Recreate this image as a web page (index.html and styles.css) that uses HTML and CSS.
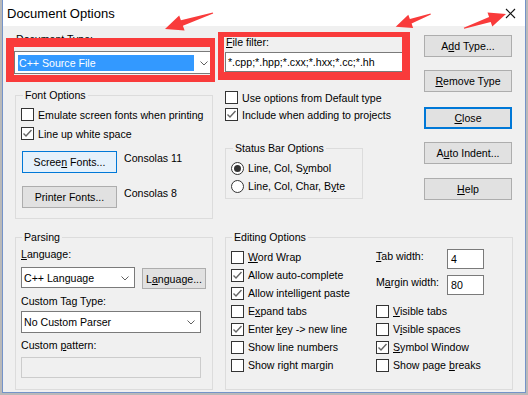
FILE: index.html
```html
<!DOCTYPE html>
<html lang="en">
<head>
    <meta charset="UTF-8">
    <title>Document Options</title>
    <link rel="stylesheet" href="styles.css">
</head>
<body>

    <div class="window">
        <div class="titlebar">
            <span class="title">Document Options</span>
        </div>

        <div class="dialog">
            <div class="top">
                <div class="col-left">
                    <div class="label doc-label">Document <u>T</u>ype:</div>
                    <div class="combo combo-doc">
                        <span class="selected">C++ Source File</span>
                        <svg class="chevron" width="8" height="5" viewBox="0 0 8 5"><polyline points="0.5,0.5 4,4 7.5,0.5" /></svg>
                    </div>

                    <fieldset class="group font-group">
                        <legend>Font Options</legend>
                        <div class="check row19"><span class="box"></span><span>Emulate screen fonts when printing</span></div>
                        <div class="check row19"><span class="box on"><svg width="11" height="11" viewBox="0 0 11 11"><polyline points="1.5,5.5 4,8 9.5,2" /></svg></span><span>Line up white space</span></div>
                        <div class="font-row first">
                            <button class="btn btn-hot font-btn">Scree<u>n</u> Fonts...</button>
                            <span class="font-name">Consolas 11</span>
                        </div>
                        <div class="font-row">
                            <button class="btn font-btn">Printer Fonts...</button>
                            <span class="font-name">Consolas 8</span>
                        </div>
                    </fieldset>
                </div>

                <div class="col-mid">
                    <div class="label filter-label"><u>F</u>ile filter:</div>
                    <div class="field filter">*.cpp;*.hpp;*.cxx;*.hxx;*.cc;*.hh</div>

                    <div class="mid-checks">
                        <div class="check row17"><span class="box"></span><span>Use options from Default type</span></div>
                        <div class="check row17"><span class="box on"><svg width="11" height="11" viewBox="0 0 11 11"><polyline points="1.5,5.5 4,8 9.5,2" /></svg></span><span>Include when adding to projects</span></div>
                    </div>

                    <fieldset class="group status-group">
                        <legend>Status Bar Options</legend>
                        <div class="check row18"><span class="radio on"></span><span>Line, Col, S<u>y</u>mbol</span></div>
                        <div class="check row18"><span class="radio"></span><span>Line, Col, Char, B<u>y</u>te</span></div>
                    </fieldset>
                </div>

                <div class="col-btns">
                    <button class="btn side-btn add">A<u>d</u>d Type...</button>
                    <button class="btn side-btn remove"><u>R</u>emove Type</button>
                    <button class="btn side-btn close"><u>C</u>lose</button>
                    <button class="btn side-btn indent">A<u>u</u>to Indent...</button>
                    <button class="btn side-btn help"><u>H</u>elp</button>
                </div>
            </div>

            <div class="bottom">
                <fieldset class="group parse-group">
                    <legend>Parsing</legend>
                    <div class="label"><u>L</u>anguage:</div>
                    <div class="lang-row">
                        <div class="combo combo-lang">
                            <span>C++ Language</span>
                            <svg class="chevron" width="8" height="5" viewBox="0 0 8 5"><polyline points="0.5,0.5 4,4 7.5,0.5" /></svg>
                        </div>
                        <button class="btn lang-btn">L<u>a</u>nguage...</button>
                    </div>
                    <div class="label tag-label">Custom Tag Type:</div>
                    <div class="combo combo-tag">
                        <span>No Custom Parser</span>
                        <svg class="chevron" width="8" height="5" viewBox="0 0 8 5"><polyline points="0.5,0.5 4,4 7.5,0.5" /></svg>
                    </div>
                    <div class="label pattern-label">Custom <u>p</u>attern:</div>
                    <div class="field disabled pattern"></div>
                </fieldset>

                <fieldset class="group edit-group">
                    <legend>Editing Options</legend>
                    <div class="edit-cols">
                        <div class="edit-left">
                            <div class="check row18"><span class="box"></span><span><u>W</u>ord Wrap</span></div>
                            <div class="check row18"><span class="box on"><svg width="11" height="11" viewBox="0 0 11 11"><polyline points="1.5,5.5 4,8 9.5,2" /></svg></span><span>Allow auto-complete</span></div>
                            <div class="check row18"><span class="box on"><svg width="11" height="11" viewBox="0 0 11 11"><polyline points="1.5,5.5 4,8 9.5,2" /></svg></span><span>Allow intelligent paste</span></div>
                            <div class="check row18"><span class="box"></span><span>E<u>x</u>pand tabs</span></div>
                            <div class="check row18"><span class="box on"><svg width="11" height="11" viewBox="0 0 11 11"><polyline points="1.5,5.5 4,8 9.5,2" /></svg></span><span>Enter <u>k</u>ey -&gt; new line</span></div>
                            <div class="check row18"><span class="box"></span><span>Show line numbers</span></div>
                            <div class="check row18"><span class="box"></span><span>Show right margin</span></div>
                        </div>
                        <div class="edit-right">
                            <div class="num-row first">
                                <span class="num-label"><u>T</u>ab width:</span>
                                <div class="field num">4</div>
                            </div>
                            <div class="num-row">
                                <span class="num-label">M<u>a</u>rgin width:</span>
                                <div class="field num">80</div>
                            </div>
                            <div class="right-checks">
                                <div class="check row18"><span class="box"></span><span><u>V</u>isible tabs</span></div>
                                <div class="check row18"><span class="box"></span><span>V<u>i</u>sible spaces</span></div>
                                <div class="check row18"><span class="box on"><svg width="11" height="11" viewBox="0 0 11 11"><polyline points="1.5,5.5 4,8 9.5,2" /></svg></span><span><u>S</u>ymbol Window</span></div>
                                <div class="check row18"><span class="box"></span><span>Show page <u>b</u>reaks</span></div>
                            </div>
                        </div>
                    </div>
                </fieldset>
            </div>
        </div>
    </div>

    <!-- annotation marks drawn over the screenshot -->
    <div class="redbox redbox-type"></div>
    <div class="redbox redbox-filter"></div>
    <svg class="arrows" width="528" height="40" viewBox="0 0 528 40">
        <polygon points="213.2,13.5 182.9,25.8 184.6,30.5 165,29 179.2,15.5 180.9,20.2 212.8,12.5" />
        <polygon points="430.9,14.5 411.6,23.6 413.1,27.9 395.7,26.7 408.3,14.7 409.9,19 430.5,13.5" />
        <polygon points="464.2,28.8 490.7,21.9 492.3,26.6 506,14 487.5,12.4 489.1,17.1 463.8,27.8" />
        <line class="x-line" x1="506" y1="9" x2="515" y2="18" />
        <line class="x-line" x1="515" y1="9" x2="506" y2="18" />
    </svg>

</body>
</html>
```

FILE: styles.css
```css
* {
    box-sizing: border-box;
}
html, body {
    margin: 0;
    padding: 0;
}
body {
    position: relative;
    width: 528px;
    height: 395px;
    overflow: hidden;
    background-color: #b9b9b9;
    font-family: "Liberation Sans", Arial, sans-serif;
    font-size: 10.6px;
    color: #000;
}
u {
    text-underline-offset: 1px;
}
.window {
    margin-left: 2px;
    width: 524px;
    height: 393px;
    border: 1px solid #7493c9;
    border-top: 0;
    background-color: #f0f0f0;
}
.titlebar {
    height: 26px;
    background-color: #fff;
    display: flex;
    align-items: center;
    padding-left: 4px;
}
.title {
    font-size: 13px;
}
.dialog {
    padding: 5px 0 0 11px;
}
.top {
    display: flex;
    height: 188px;
}
.col-left {
    width: 199px;
}
.col-mid {
    width: 182px;
    margin-left: 12px;
}
.col-btns {
    width: 88px;
    margin-left: 17px;
    display: flex;
    flex-direction: column;
}
.label {
    height: 13px;
    line-height: 13px;
    white-space: nowrap;
}
.doc-label {
    padding-left: 2px;
    margin-top: 2px;
}

/* controls */
.combo {
    position: relative;
    background-color: #fff;
    border: 1px solid #7a7a7a;
    display: flex;
    align-items: center;
    padding-left: 2px;
}
.chevron {
    position: absolute;
    right: 5px;
    top: 50%;
    margin-top: -2px;
}
.chevron polyline {
    fill: none;
    stroke: #606060;
    stroke-width: 1;
}
.combo-doc {
    width: 197px;
    height: 23px;
    margin-top: 5px;
    align-items: flex-start;
    padding: 3px 0 0 3px;
}
.combo-doc .chevron {
    right: 2px;
}
.selected {
    width: 176px;
    height: 16px;
    line-height: 16px;
    padding-left: 1px;
    background-color: #3399ff;
    color: #fff;
}
.field {
    background-color: #fff;
    border: 1px solid #7a7a7a;
    line-height: 18px;
    padding-left: 2px;
    white-space: nowrap;
}
.field.disabled {
    background-color: #f0f0f0;
    border-color: #cccccc;
}
.btn {
    display: block;
    height: 22px;
    margin: 0;
    padding: 0;
    background-color: #e1e1e1;
    border: 1px solid #adadad;
    font-family: inherit;
    font-size: 10.6px;
    color: #000;
    text-align: center;
    white-space: nowrap;
}
.btn-hot {
    background-color: #e5f1fb;
    border-color: #0078d7;
}
.check {
    display: flex;
    align-items: center;
    gap: 4px;
    white-space: nowrap;
}
.row17 { height: 17px; }
.row18 { height: 18px; }
.row19 { height: 19px; }
.box {
    width: 13px;
    height: 13px;
    flex: none;
    border: 1px solid #333;
    background-color: #fff;
    display: flex;
    align-items: center;
    justify-content: center;
}
.box svg polyline {
    fill: none;
    stroke: #666;
    stroke-width: 1.4;
}
.radio {
    width: 13px;
    height: 13px;
    flex: none;
    border: 1px solid #333;
    border-radius: 50%;
    background-color: #fff;
    display: flex;
    align-items: center;
    justify-content: center;
}
.radio.on::after {
    content: "";
    width: 7px;
    height: 7px;
    border-radius: 50%;
    background-color: #333;
}

/* group boxes */
.group {
    margin: 0;
    min-width: 0;
    border: 1px solid #dcdcdc;
    padding: 3px 5px 10px 5px;
}
.group legend {
    padding: 0 2px;
    margin-left: 2px;
    line-height: 13px;
}
.font-group {
    margin: 15px 0 0 1px;
    width: 198px;
}
.font-row {
    display: flex;
    align-items: flex-start;
    gap: 7px;
    margin-top: 13px;
}
.font-row.first {
    margin-top: 8px;
}
.font-btn {
    width: 95px;
    margin-left: 1px;
}
.font-name {
    line-height: 13px;
    padding-top: 1px;
}

.filter-label {
    margin-top: 5px;
    padding-left: 1px;
}
.filter {
    width: 178px;
    height: 20px;
    margin-top: 3px;
}
.mid-checks {
    margin-top: 17px;
}
.status-group {
    width: 138px;
    margin-top: 19px;
    padding: 4px 5px 3px 5px;
}

.side-btn {
    width: 88px;
}
.add { margin-top: 4px; }
.remove { margin-top: 13px; }
.close {
    margin-top: 15px;
    border: 2px solid #0078d7;
}
.indent { margin-top: 13px; }
.help { margin-top: 14px; }

.bottom {
    display: flex;
    margin-top: 12px;
}
.bottom .group legend {
    margin-left: 1px;
}
.parse-group {
    width: 198px;
    margin-left: 1px;
    padding: 4px 5px 11px 5px;
}
.lang-row {
    display: flex;
    gap: 7px;
    margin-top: 6px;
}
.combo-lang {
    width: 114px;
    height: 21px;
}
.lang-btn {
    width: 64px;
    height: 21px;
    margin-top: 1px;
}
.tag-label {
    margin-top: 6px;
}
.combo-tag {
    width: 180px;
    height: 22px;
    margin-top: 3px;
}
.pattern-label {
    margin-top: 6px;
}
.pattern {
    width: 180px;
    height: 21px;
    margin-top: 5px;
}

.edit-group {
    width: 288px;
    margin-left: 12px;
    padding: 4px 5px 10px 5px;
}
.edit-cols {
    display: flex;
}
.edit-left {
    width: 145px;
}
.num-row {
    display: flex;
    height: 20px;
    margin-top: 6px;
}
.num-row.first {
    margin-top: 1px;
}
.num-label {
    width: 71px;
    line-height: 13px;
    padding-top: 1px;
    white-space: nowrap;
}
.num {
    width: 37px;
    height: 20px;
    padding-left: 3px;
}
.right-checks {
    margin-top: 7px;
}

/* annotation overlay */
.redbox {
    position: absolute;
    border-style: solid;
    border-color: #f93b3b;
}
.redbox-type {
    left: 6px;
    top: 38px;
    width: 209px;
    height: 44px;
    border-width: 9px 5px 7px 8px;
}
.redbox-filter {
    left: 218px;
    top: 32px;
    width: 192px;
    height: 48px;
    border-width: 5px 8px 8px 6px;
}
.arrows {
    position: absolute;
    left: 0;
    top: 0;
}
.arrows polygon {
    fill: #f93b3b;
}
.x-line {
    stroke: #111;
    stroke-width: 1.1;
}
```
